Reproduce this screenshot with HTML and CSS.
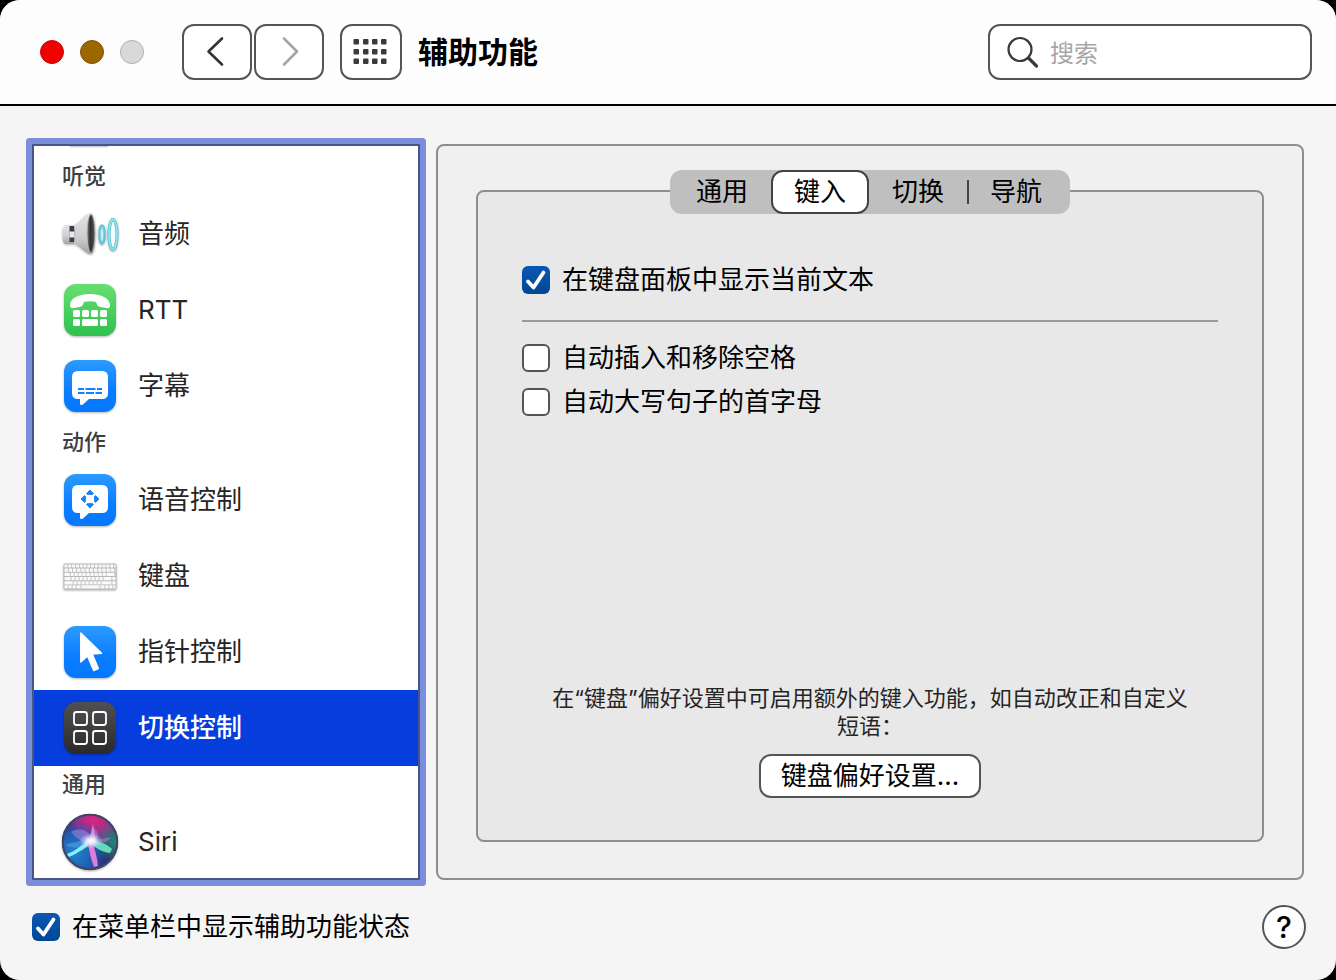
FILE: index.html
```html
<!DOCTYPE html>
<html lang="zh-CN">

<head>
    <meta charset="UTF-8">
    <meta name="viewport" content="width=device-width, initial-scale=1.0">
    <title>辅助功能</title>
    <link rel="stylesheet" href="styles.css">
</head>
<body>
    <div class="window">
        <header class="toolbar">
            <div class="lights">
                <button class="light light-close" aria-label="关闭"></button>
                <button class="light light-min" aria-label="最小化"></button>
                <button class="light light-zoom" aria-label="缩放" disabled></button>
            </div>
            <nav class="nav">
                <button class="tool-btn" aria-label="后退">
                    <svg width="32" height="32" viewBox="0 0 32 32"><path d="M21 2.500 7.500 15.500 21 28.500" fill="none" stroke="#333" stroke-width="2.600" stroke-linecap="round" stroke-linejoin="round"/></svg>
                </button>
                <button class="tool-btn" aria-label="前进" disabled>
                    <svg width="32" height="32" viewBox="0 0 32 32"><path d="M11 2.500 24 15.500 11 28.500" fill="none" stroke="#a6a6a6" stroke-width="2.600" stroke-linecap="round" stroke-linejoin="round"/></svg>
                </button>
            </nav>
            <button class="tool-btn tool-grid" aria-label="显示全部">
                <svg width="36" height="28" viewBox="0 0 36 28" fill="#3a3a3a">
                    <rect x="0.500" y="1" width="5.500" height="5.500" rx="1"/><rect x="10" y="1" width="5.500" height="5.500" rx="1"/><rect x="19" y="1" width="5.500" height="5.500" rx="1"/><rect x="28" y="1" width="5.500" height="5.500" rx="1"/>
                    <rect x="0.500" y="11" width="5.500" height="5.500" rx="1"/><rect x="10" y="11" width="5.500" height="5.500" rx="1"/><rect x="19" y="11" width="5.500" height="5.500" rx="1"/><rect x="28" y="11" width="5.500" height="5.500" rx="1"/>
                    <rect x="0.500" y="20.500" width="5.500" height="5.500" rx="1"/><rect x="10" y="20.500" width="5.500" height="5.500" rx="1"/><rect x="19" y="20.500" width="5.500" height="5.500" rx="1"/><rect x="28" y="20.500" width="5.500" height="5.500" rx="1"/>
                </svg>
            </button>
            <h1 class="title">辅助功能</h1>
            <label class="search">
                <svg width="34" height="34" viewBox="0 0 34 34" fill="none" stroke="#3a3a3a"><circle cx="14" cy="14.500" r="11.500" stroke-width="2.200"/><path d="m22.500 23 8 8" stroke-width="3.200" stroke-linecap="round"/></svg>
                <input type="search" placeholder="搜索" aria-label="搜索">
            </label>
        </header>

        <main class="content">
            <ul class="list">
                <li class="item-cut"></li>
                <li class="group-name">听觉</li>
                <li><a class="item" href="#audio">
                    <svg class="icon" viewBox="0 0 60 60">
                        <defs>
                            <linearGradient id="cone" x1="0" y1="0" x2="0" y2="1"><stop offset="0" stop-color="#e4e4e6"/><stop offset=".6" stop-color="#cdced0"/><stop offset="1" stop-color="#a0a1a3"/></linearGradient>
                            <linearGradient id="hole" x1="0" y1="0" x2="1" y2="0"><stop offset="0" stop-color="#8a8a8a"/><stop offset=".4" stop-color="#2e2e2e"/><stop offset="1" stop-color="#5a5a5a"/></linearGradient>
                        </defs>
                        <path d="M6 21q-3.500 0-3.500 9.500T6 40h8V21z" fill="url(#cone)"/>
                        <path d="M9.500 22h5v16h-5z" fill="#3d3f42"/>
                        <path d="M9.500 27.500h5v6h-5z" fill="#e8e8ea"/>
                        <path d="M14 21C20 19 25 9 31 9c3 0 4.500 9 4.500 20.500S34 50 31 50c-6 0-10-8-17-10.500 1-6 1-12 0-18.500z" fill="url(#cone)"/>
                        <ellipse cx="31" cy="29.500" rx="4" ry="19" fill="url(#hole)" stroke="#bcbcbe" stroke-width=".8"/>
                        <ellipse cx="42" cy="30.500" rx="3" ry="9.500" fill="#7fccdb" stroke="#63c3d6" stroke-width="1.500"/>
                        <ellipse cx="42" cy="30.500" rx="1.200" ry="6.500" fill="#c4eff5"/>
                        <ellipse cx="53" cy="30.500" rx="4" ry="15" fill="#f1fcfe" stroke="#5fc3d6" stroke-width="3.200"/>
                        <ellipse cx="53" cy="30.500" rx="4" ry="15" fill="none" stroke="#a5e4ef" stroke-width="1.400"/>
                    </svg>
                    音频</a></li>
                <li><a class="item" href="#rtt">
                    <svg class="icon" viewBox="0 0 60 60">
                        <defs><linearGradient id="green" x1="0" y1="0" x2="0" y2="1"><stop offset="0" stop-color="#67df70"/><stop offset="1" stop-color="#2fc14e"/></linearGradient></defs>
                        <rect x="4" y="4" width="52" height="52" rx="12" fill="url(#green)"/>
                        <g fill="#fff">
                            <path d="M10 25.500C10 18 19 14 30 14s20 4 20 11.500c0 2-1.500 3-3.500 2.600l-6-1.100c-2-.400-3.500-1.500-3.800-3L36.200 22c-4-1-8.400-1-12.400 0l-.500 2c-.300 1.500-1.800 2.600-3.800 3l-6 1.100c-2 .400-3.500-.600-3.500-2.600z"/>
                            <rect x="13" y="30" width="7" height="7" rx="1.500"/><rect x="22" y="30" width="7" height="7" rx="1.500"/><rect x="31" y="30" width="7" height="7" rx="1.500"/><rect x="40" y="30" width="7" height="7" rx="1.500"/>
                            <rect x="13" y="39" width="7" height="7" rx="1.500"/><rect x="22" y="39" width="16" height="7" rx="1.500"/><rect x="40" y="39" width="7" height="7" rx="1.500"/>
                        </g>
                    </svg>
                    RTT</a></li>
                <li><a class="item" href="#captions">
                    <svg class="icon" viewBox="0 0 60 60">
                        <defs><linearGradient id="blue" x1="0" y1="0" x2="0" y2="1"><stop offset="0" stop-color="#2b9bff"/><stop offset=".6" stop-color="#0a7cff"/><stop offset="1" stop-color="#0678ff"/></linearGradient></defs>
                        <rect x="4" y="4" width="52" height="52" rx="12" fill="url(#blue)"/>
                        <path d="M18 15h24q6 0 6 6v16q0 6-6 6H29l-6 5.500q-3 1.500-3-1V43h-2q-6 0-6-6V21q0-6 6-6z" fill="#fff"/>
                        <path d="M18 33h6m1.500 0h10m1.500 0h5M18 37h6.500m1.500 0h8m1.500 0h6.500" stroke="#147fff" stroke-width="2"/>
                    </svg>
                    字幕</a></li>
                <li class="group-name">动作</li>
                <li><a class="item" href="#voice">
                    <svg class="icon" viewBox="0 0 60 60">
                        <rect x="4" y="4" width="52" height="52" rx="12" fill="url(#blue)"/>
                        <path d="M18 15h24q6 0 6 6v16q0 6-6 6H29l-6 5.500q-3 1.500-3-1V43h-2q-6 0-6-6V21q0-6 6-6z" fill="#fff"/>
                        <path d="m30 20 3.500 3.500-1 1h-5l-1-1zM30 38l3.500-3.500-1-1h-5l-1 1zM21 29l3.500-3.500 1 1v5l-1 1zM39 29l-3.500-3.500-1 1v5l1 1z" fill="#147fff" stroke="#147fff" stroke-width=".8" stroke-linejoin="round"/>
                    </svg>
                    语音控制</a></li>
                <li><a class="item" href="#keyboard">
                    <svg class="icon" viewBox="0 0 60 60">
                        <rect x="3.500" y="17.500" width="53" height="26" rx="1.500" fill="#b8b8b8"/>
                        <g stroke="#fafafa" stroke-width="3.200" fill="none">
                            <path d="M4.500 20h51" stroke-dasharray="3 .800"/>
                            <path d="M4.500 24.200h51" stroke-dasharray="3.400 .800"/>
                            <path d="M4.500 28.400h51" stroke-dasharray="5.200 .800 3.200 .800 3.200 .800 3.200 .800 3.200 .800 3.200 .800 3.200 .800 3.200 .800 3.200 .800 3.200 .800 8 .800"/>
                            <path d="M4.500 32.600h51" stroke-dasharray="6.200 .800 3.200 .800 3.200 .800 3.200 .800 3.200 .800 3.200 .800 3.200 .800 3.200 .800 3.200 .800 8 .800"/>
                            <path d="M4.500 36.800h51" stroke-dasharray="8.200 .800 3.200 .800 3.200 .800 3.200 .800 3.200 .800 3.200 .800 3.200 .800 3.200 .800 10 .800"/>
                            <path d="M4.500 40.900h51" stroke-dasharray="3.200 .800 3.200 .800 3.200 .800 4.200 .800 18 .800 4.200 .800 3.200 .800 3.200 .800"/>
                        </g>
                    </svg>
                    键盘</a></li>
                <li><a class="item" href="#pointer">
                    <svg class="icon" viewBox="0 0 60 60">
                        <rect x="4" y="4" width="52" height="52" rx="12" fill="url(#blue)"/>
                        <path d="M20.800 11 41.500 31.200l-9.300.800 6.100 14.500-4.600 2L27.500 34l-6.700 6z" fill="#fff" stroke="#fff" stroke-width="1.500" stroke-linejoin="round"/>
                    </svg>
                    指针控制</a></li>
                <li><a class="item item-selected" href="#switch" aria-current="true">
                    <svg class="icon" viewBox="0 0 60 60">
                        <defs><linearGradient id="dark" x1="0" y1="0" x2="0" y2="1"><stop offset="0" stop-color="#505052"/><stop offset="1" stop-color="#2a2a2c"/></linearGradient></defs>
                        <rect x="4" y="4" width="52" height="52" rx="12" fill="url(#dark)"/>
                        <g fill="none" stroke="#fff" stroke-width="1.800"><rect x="14" y="14" width="13" height="13" rx="2.500"/><rect x="33" y="14" width="13" height="13" rx="2.500"/><rect x="14" y="33" width="13" height="13" rx="2.500"/><rect x="33" y="33" width="13" height="13" rx="2.500"/></g>
                    </svg>
                    切换控制</a></li>
                <li class="group-name">通用</li>
                <li><a class="item" href="#siri">
                    <svg class="icon" viewBox="0 0 60 60">
                        <defs>
                            <radialGradient id="siriPink" cx=".58" cy=".08" r=".55"><stop offset="0" stop-color="#d8287f"/><stop offset=".6" stop-color="#9c2b8c"/><stop offset="1" stop-color="#7a2a8c" stop-opacity="0"/></radialGradient>
                            <radialGradient id="siriBlue" cx=".22" cy=".7" r=".6"><stop offset="0" stop-color="#1f86d0"/><stop offset=".6" stop-color="#1f66bd" stop-opacity=".8"/><stop offset="1" stop-color="#1c52af" stop-opacity="0"/></radialGradient>
                            <radialGradient id="siriTeal" cx=".95" cy=".5" r=".4"><stop offset="0" stop-color="#1f8a75"/><stop offset="1" stop-color="#1f8a75" stop-opacity="0"/></radialGradient>
                            <radialGradient id="siriGlow"><stop offset="0" stop-color="#fff"/><stop offset=".35" stop-color="#f0eeff" stop-opacity=".9"/><stop offset="1" stop-color="#bfb8ff" stop-opacity="0"/></radialGradient>
                        </defs>
                        <circle cx="30" cy="30" r="28" fill="#2f2b73"/>
                        <circle cx="30" cy="30" r="28" fill="url(#siriPink)"/>
                        <circle cx="30" cy="30" r="28" fill="url(#siriBlue)"/>
                        <circle cx="30" cy="30" r="28" fill="url(#siriTeal)"/>
                        <path d="M11 20c9-5 17-2 21 6l2-10c4 3 5 7 3 12l14-3c-4 6-9 7-16 6l-7 1c-6-2-12-6-17-12z" fill="#b08ae0" opacity=".5"/>
                        <path d="M5 33c9-3 17-5 26-4l-4 5c-8 3-15 2-22-1z" fill="#5aa9e8" opacity=".5"/>
                        <path d="M7 42c8-3 15-8 21-15l5 3c-6 5-15 11-24 15z" fill="#8eeef5"/>
                        <path d="M29 28c11 1 18 4 23 9l-2 4c-8-1-15-5-21-11z" fill="#62dcb8"/>
                        <path d="M28 30c1 9 3 17 6 25l4-1c-1-9-3-17-6-25z" fill="#dd7edd"/>
                        <path d="M33 12l3 18-7-1z" fill="#f1b4ea" opacity=".7"/>
                        <ellipse cx="31" cy="29" rx="12" ry="8" fill="url(#siriGlow)"/>
                        <circle cx="30" cy="30" r="27.200" fill="none" stroke="#3f4568" stroke-width="2"/>
                    </svg>
                    Siri</a></li>
            </ul>

            <section class="panel">
                <div class="tabs" role="tablist">
                    <button class="tab" role="tab">通用</button>
                    <button class="tab tab-active" role="tab" aria-selected="true">键入</button>
                    <button class="tab" role="tab">切换</button>
                    <button class="tab tab-divided" role="tab">导航</button>
                </div>
                <div class="group" role="tabpanel">
                    <label class="check"><input type="checkbox" checked>在键盘面板中显示当前文本</label>
                    <hr class="rule">
                    <label class="check"><input type="checkbox">自动插入和移除空格</label>
                    <label class="check"><input type="checkbox">自动大写句子的首字母</label>
                    <div class="more">
                        <p class="note">在“键盘”偏好设置中可启用额外的键入功能，如自动改正和自定义短语：</p>
                        <button class="push">键盘偏好设置...</button>
                    </div>
                </div>
            </section>
        </main>

        <footer class="footer">
            <label class="check"><input type="checkbox" checked>在菜单栏中显示辅助功能状态</label>
            <button class="help" aria-label="帮助">?</button>
        </footer>
    </div>
</body>

</html>
```

FILE: styles.css
```css
* {
    margin: 0;
    padding: 0;
    box-sizing: border-box;
}

body {
    background-color: #000;
    font-family: Inter, "Noto Sans CJK SC", sans-serif;
    font-size: 26px;
    line-height: 28px;
    color: #000;
}

button, input {
    font: inherit;
    color: inherit;
}

.window {
    display: flex;
    flex-direction: column;
    height: 100vh;
    background-color: #f5f5f5;
    border-radius: 20px;
    overflow: hidden;
}

/* toolbar */

.toolbar {
    display: flex;
    align-items: center;
    padding: 24px 24px 24px 40px;
    background-color: #fdfdfd;
    border-bottom: 2px solid #000;
}

.lights {
    display: flex;
    gap: 16px;
    margin-right: 38px;
}

.light {
    width: 24px;
    height: 24px;
    border-radius: 50%;
    border: 1px solid;
}

.light-close {
    background-color: #f00000;
    border-color: #d00000;
}

.light-min {
    background-color: #9d6700;
    border-color: #805000;
}

.light-zoom {
    background-color: #d9d9d9;
    border-color: #b0b0b0;
}

.nav {
    display: flex;
    gap: 2px;
    margin-right: 16px;
}

.tool-btn {
    display: flex;
    align-items: center;
    justify-content: center;
    width: 70px;
    height: 56px;
    background-color: #fff;
    border: 2px solid #555;
    border-radius: 12px;
}

.tool-grid {
    width: 62px;
    margin-right: 16px;
}

.title {
    font-size: 30px;
    line-height: 44px;
    font-weight: bold;
}

.search {
    display: flex;
    align-items: center;
    gap: 10px;
    width: 324px;
    height: 56px;
    margin-left: auto;
    padding: 0 16px;
    background-color: #fff;
    border: 2px solid #555;
    border-radius: 12px;
}

.search svg {
    flex: none;
}

.search input {
    width: 100%;
    padding-top: 4px;
    font-size: 24px;
    border: none;
    outline: none;
    background: none;
}

.search input::placeholder {
    color: #a6a6a6;
}

/* main area */

.content {
    display: flex;
    flex: 1;
    gap: 16px;
    min-height: 0;
    padding: 38px 32px 0;
}

.list {
    flex: none;
    width: 388px;
    list-style: none;
    background-color: #fff;
    border: 2px solid #4b5486;
    box-shadow: 0 0 0 6px #7b8edb;
    border-radius: 1px;
    overflow: hidden;
}

/* bottom edge of the row scrolled out of view */
.item-cut {
    height: 12px;
    padding-left: 36px;
}

.item-cut::before {
    content: "";
    display: block;
    width: 38px;
    height: 1px;
    background-color: #ccc;
    box-shadow: 0 0 2px #aaa;
}

.group-name {
    padding: 4px 28px 6px;
    font-size: 22px;
    font-weight: 500;
    color: #3f3f3f;
}

.item {
    display: flex;
    align-items: center;
    gap: 18px;
    height: 76px;
    padding: 0 26px;
    color: #252525;
    text-decoration: none;
}

.item-selected {
    background-color: #053edd;
    color: #fff;
    font-weight: 500;
}

.icon {
    flex: none;
    width: 60px;
    height: 60px;
    filter: drop-shadow(0 1px 1px rgba(0, 0, 0, 0.3));
}

.panel {
    display: flex;
    flex-direction: column;
    flex: 1;
    padding: 24px 38px 36px;
    background-color: #f0f0f0;
    border: 2px solid #8e8e8e;
    border-radius: 8px;
}

.tabs {
    display: flex;
    align-self: center;
    width: 400px;
    max-width: 100%;
    padding: 0 5px 0 3px;
    background-color: #bfbfbf;
    border-radius: 12px;
    z-index: 1;
}

.tab {
    flex: 1;
    height: 44px;
    background: none;
    border: 2px solid transparent;
    border-radius: 12px;
}

.tab-active {
    background-color: #fff;
    border-color: #444;
}

.tab-divided {
    background: linear-gradient(#444, #444) no-repeat left center / 2px 24px border-box;
    border-radius: 0;
}

.group {
    display: flex;
    flex-direction: column;
    flex: 1;
    margin-top: -24px;
    padding: 74px 44px 42px;
    background-color: #e8e8e8;
    border: 2px solid #8e8e8e;
    border-radius: 8px;
}

.check {
    display: flex;
    align-items: center;
    gap: 12px;
}

.check + .check {
    margin-top: 16px;
}

.check input {
    appearance: none;
    flex: none;
    width: 28px;
    height: 28px;
    background-color: #fff;
    border: 2px solid #555;
    border-radius: 6px;
}

.check input:checked {
    background: url("data:image/svg+xml,%3Csvg xmlns='http://www.w3.org/2000/svg' viewBox='0 0 28 28'%3E%3Cpath d='M6 15.500l5.500 6L21.500 6.500' fill='none' stroke='%23fff' stroke-width='3.800' stroke-linecap='round' stroke-linejoin='round'/%3E%3C/svg%3E") center / 28px 28px no-repeat, linear-gradient(#0a57b4, #004795);
    border: none;
}

.rule {
    height: 2px;
    margin: 26px 0 22px;
    border: none;
    background-color: #999;
}

.more {
    display: flex;
    flex-direction: column;
    align-items: center;
    gap: 14px;
    margin-top: auto;
}

.note {
    padding: 0 24px;
    font-size: 22px;
    text-align: center;
    color: #252525;
}

.push {
    height: 44px;
    padding: 0 20px;
    background-color: #fff;
    border: 2px solid #555;
    border-radius: 12px;
}

/* footer */

.footer {
    display: flex;
    align-items: center;
    justify-content: space-between;
    padding: 25px 30px 31px 32px;
}

.help {
    width: 44px;
    height: 44px;
    font-size: 30px;
    font-weight: 500;
    background-color: #fff;
    border: 2px solid #555;
    border-radius: 50%;
}
```
